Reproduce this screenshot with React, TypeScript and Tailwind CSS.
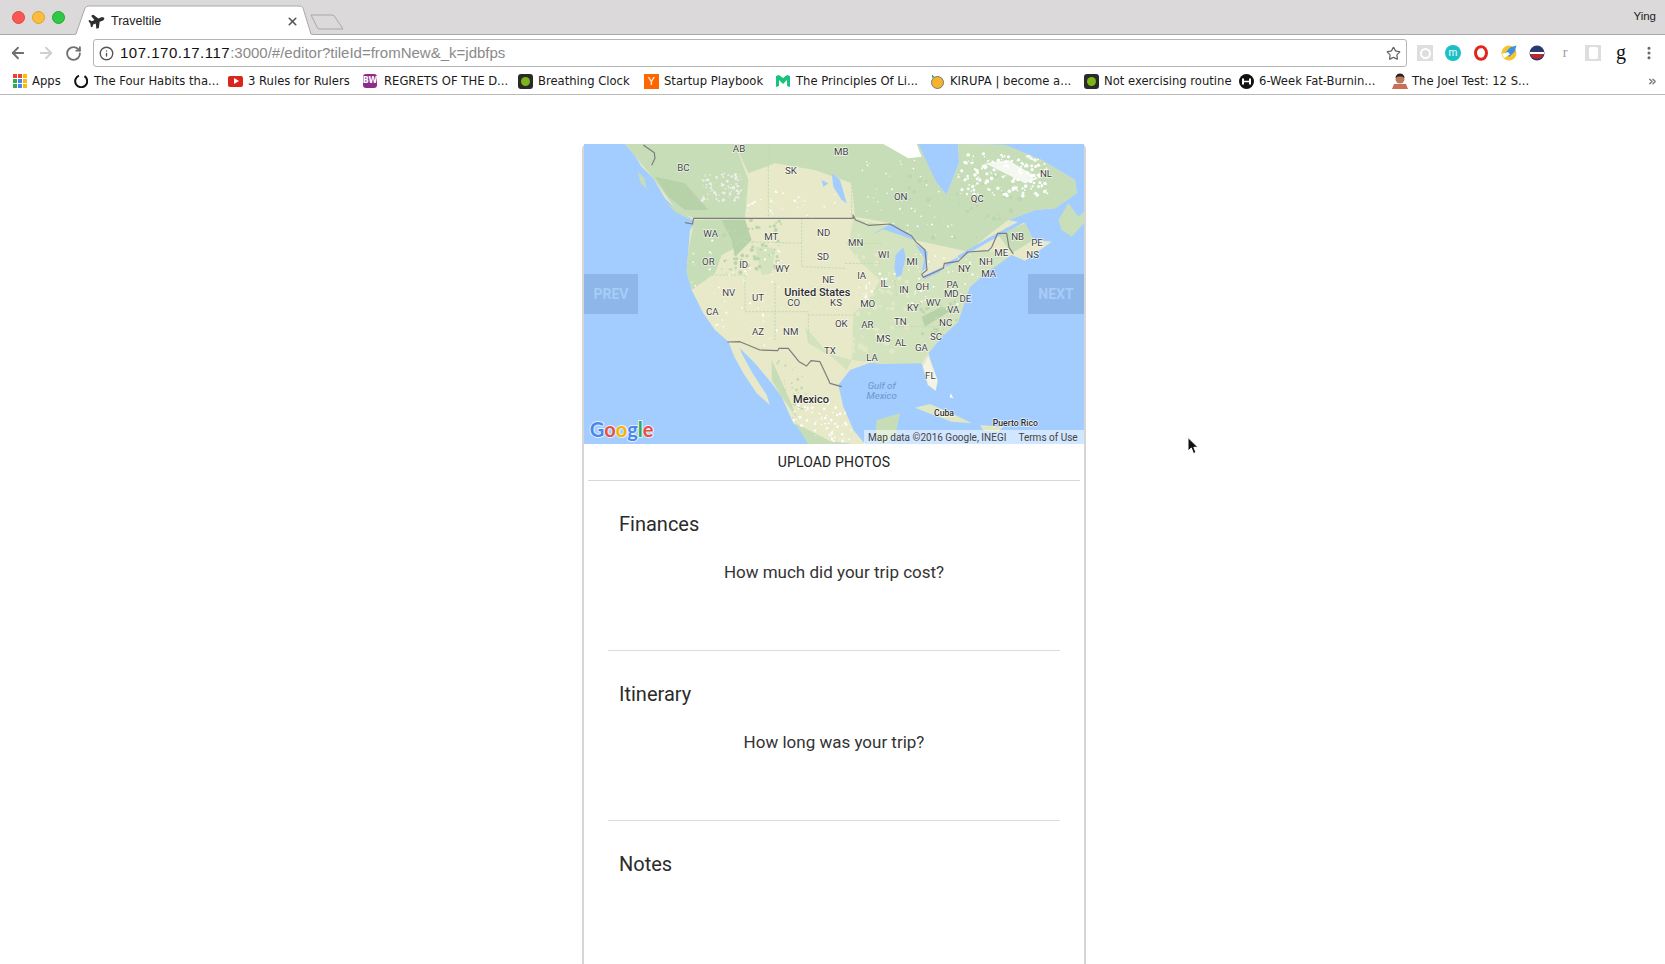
import { ArrowLeft, ArrowRight, ChevronsRight, Info, MoreVertical, RotateCw, Star, X } from "lucide-react";
import { FaPlane } from "react-icons/fa";
import type { ReactNode } from "react";

const stateLabels: [string, number, number][] = [
  ["AB", 492, 24], ["MB", 799, 33], ["BC", 325, 81], ["SK", 648, 90], ["ON", 977, 168], ["QC", 1207, 174],
  ["NL", 1413, 99], ["NB", 1328, 288], ["PE", 1386, 306], ["NS", 1373, 342], ["ME", 1279, 336], ["NH", 1233, 363],
  ["MA", 1241, 399], ["NY", 1168, 384], ["WA", 407, 279], ["MT", 589, 288], ["ND", 746, 276], ["MN", 842, 306],
  ["WI", 926, 342], ["MI", 1011, 363], ["OR", 400, 363], ["ID", 506, 372], ["WY", 622, 384], ["SD", 744, 348],
  ["NE", 760, 417], ["IA", 860, 405], ["IL", 928, 429], ["IN", 987, 447], ["OH", 1042, 438], ["PA", 1132, 432],
  ["MD", 1129, 459], ["DE", 1171, 474], ["NV", 461, 456], ["UT", 549, 471], ["CO", 656, 486], ["KS", 783, 486],
  ["MO", 878, 489], ["KY", 1014, 501], ["WV", 1075, 486], ["VA", 1135, 507], ["CA", 412, 513], ["OK", 799, 549],
  ["AR", 877, 552], ["TN", 976, 543], ["NC", 1112, 546], ["AZ", 549, 573], ["NM", 647, 573], ["TX", 765, 630],
  ["MS", 925, 594], ["AL", 977, 606], ["SC", 1083, 588], ["GA", 1039, 621], ["LA", 891, 651], ["FL", 1066, 705],
];

const landPath =
  "M150,12 L175,40 200,80 235,115 270,175 300,205 335,225 352,240 358,252 345,270 340,330 335,395 350,450 385,520 420,570 460,605 478,650 505,700 545,760 585,795 575,765 530,695 500,640 495,625 540,670 590,730 620,770 655,850 700,880 770,905 830,912 870,912 835,870 805,800 790,735 825,690 885,668 925,672 1000,665 1040,670 1058,735 1082,752 1088,720 1070,670 1060,640 1100,590 1150,545 1160,490 1185,440 1225,405 1260,375 1310,345 1350,362 1430,305 1375,300 1350,250 1300,240 1380,210 1440,205 1505,160 1500,120 1400,60 1290,15 1150,12 1152,70 1115,165 1085,130 1060,80 1030,12 Z";

// terrain texture: [x0, y0, x1, y1, count, colour, largest radius]
const textureAreas: [number, number, number, number, number, string, number][] = [
  [440, 240, 620, 400, 90, "#bad5ac", 5],
  [1030, 480, 1150, 590, 45, "#bcd6ae", 5],
  [590, 660, 700, 840, 50, "#c0d9b1", 4],
  [830, 330, 1000, 640, 70, "#e3e8c6", 8],
  [1000, 100, 1400, 300, 50, "#bcd6ae", 7],
  [380, 100, 500, 185, 90, "#efeeea", 3.5],
  [350, 300, 620, 620, 80, "#ffffff", 2.5],
  [1150, 40, 1420, 170, 190, "#ffffff", 4.5],
  [1000, 340, 1250, 520, 60, "#ffffff", 2.5],
  [650, 780, 830, 912, 90, "#ffffff", 3],
  [500, 150, 830, 235, 40, "#ffffff", 2.5],
  [850, 60, 1150, 300, 60, "#ffffff", 2],
  [840, 400, 960, 480, 25, "#ffffff", 3],
];

let seed = 7;
const next = () => {
  seed = (seed * 16807) % 2147483647;
  return seed / 2147483647;
};
const texture = textureAreas.flatMap(([x0, y0, x1, y1, count, fill, rMax]) =>
  Array.from({ length: count }, () => ({
    x: x0 + next() * (x1 - x0),
    y: y0 + next() * (y1 - y0),
    r: 1 + next() * rMax,
    fill,
  })),
);

function GoogleMap() {
  return (
    <svg viewBox="27 12 1500 900" width={500} height={300} className="block">
      <defs>
        <clipPath id="land-clip">
          <path d={landPath} />
        </clipPath>
        <filter id="soften" x="0" y="0" width="100%" height="100%">
          <feGaussianBlur stdDeviation="1.6" />
        </filter>
      </defs>
      <rect x="27" y="12" width="1500" height="900" fill="#a3ccff" />

      <g filter="url(#soften)">
        {/* land */}
        <path fill="#e8e9c9" d={landPath} />
        <path fill="#c8dfba" d="M1450,240 L1480,190 1510,230 1527,215 1527,250 1490,290 1460,270 Z" />

        {/* forest and low green cover */}
        <g fill="#c6ddb8">
          <path d="M150,12 L480,12 520,120 510,235 355,235 300,205 235,115 Z" />
          <path d="M480,12 L930,12 1030,12 1085,130 1115,165 1152,70 1150,12 1290,15 1400,60 1500,120 1505,160 1440,205 1380,210 1300,240 1240,285 1180,335 1020,300 950,250 840,230 830,130 720,90 600,70 520,100 Z" />
          <path d="M1270,285 L1350,250 1375,300 1310,340 Z" />
          <path d="M358,240 L510,238 525,300 440,345 420,400 350,450 335,395 340,330 Z" />
          <path d="M905,840 L975,820 960,890 930,912 900,900 Z" />
          <path d="M660,850 L770,905 830,912 700,912 Z" />
          <path d="M590,660 L640,770 670,840 620,770 590,720 Z" />
        </g>
        <g fill="#d3e3bd">
          <path d="M835,235 L945,260 1010,295 1050,335 1040,410 1105,385 1150,365 1180,338 1240,332 1310,345 1225,405 1185,440 1150,545 1100,590 1060,640 1040,670 925,672 830,660 835,520 880,480 915,420 860,370 820,320 Z" />
          <path d="M540,320 L600,325 590,400 560,405 Z" />
          <path d="M690,560 L760,640 830,660 815,690 770,650 700,610 Z" />
        </g>
        <g fill="#b7d2a9">
          <path d="M440,240 L510,240 530,300 480,350 470,300 Z" />
          <path d="M240,110 L330,130 400,210 330,210 280,170 Z" />
          <path d="M1040,530 L1100,500 1130,510 1050,560 Z" />
        </g>

        {/* snow and bare ground */}
        <g fill="#ffffff">
          <path d="M925,12 L1000,55 1040,50 1025,12 Z" />
          <path d="M1230,70 L1300,60 1390,115 1350,130 1290,100 Z" opacity={0.8} />
          <path d="M1060,650 L1075,690 1088,725 1082,752 1060,735 1045,680 Z" opacity={0.5} />
        </g>
        <g clipPath="url(#land-clip)">
          {texture.map((dot, i) => (
            <circle key={i} cx={dot.x} cy={dot.y} r={dot.r} fill={dot.fill} />
          ))}
        </g>

        {/* lakes */}
        <g fill="#a3ccff">
          <path d="M888,285 L950,250 1010,290 1015,300 975,285 925,268 Z" />
          <path d="M962,345 L985,322 992,350 980,405 965,412 958,385 Z" />
          <path d="M1020,312 L1058,335 1055,385 1040,395 1048,355 Z" />
          <path d="M1040,410 L1100,382 1112,378 1090,398 1050,416 Z" />
          <path d="M1108,372 L1148,352 1150,362 1115,380 Z" />
          <path d="M770,100 L795,120 815,190 800,180 775,140 Z" />
          <path d="M740,120 L760,130 745,140 Z" />
          <path d="M270,190 L300,205 340,240 355,252 338,250 305,225 Z" />
        </g>
        <path d="M1150,352 L1240,300 1310,262 1360,235" fill="none" stroke="#a3ccff" strokeWidth="10" />

        {/* islands */}
        <g fill="#c6ddb8">
          <path d="M188,95 L208,115 215,148 198,130 Z" />
          <path d="M275,190 L335,225 345,240 300,215 Z" />
          <path d="M1020,803 L1065,792 1130,820 1190,850 1130,845 1050,815 Z" fill="#dfe8c4" />
          <path d="M1215,855 L1285,860 1270,875 1225,872 Z" fill="#dfe8c4" />
          <path d="M1127,760 L1135,775 1124,772 Z" fill="#ffffff" />
        </g>

        {/* state lines */}
        <path
          d="M410,405 L510,405 510,515 700,515 700,600 M510,305 L680,310 680,380 815,385 M680,235 L680,310 M815,310 L920,310 M810,370 L915,370 M580,12 L580,235 M830,130 L830,235 M600,430 L600,600 M700,525 L840,525 M960,560 L1100,560 M960,420 L965,470"
          fill="none"
          stroke="#c2dab4"
          strokeWidth="3"
          strokeDasharray="7 4"
        />
      </g>

      {/* borders */}
      <g fill="none" stroke="#7c7c7c" strokeWidth="3.5" strokeLinejoin="round">
        <path d="M205,15 L238,38 240,55 230,76" />
        <path d="M330,248 L352,252 356,235 835,235 834,225 842,240 880,256 945,252 1010,288 1022,305 1050,330 1056,390 1040,403 1045,412 1105,385 1108,370 1150,364 1178,336 1240,332 1250,322 1268,280 1295,280 1302,322 1315,342" />
        <path d="M457,606 L495,605 555,630 608,632 612,625 640,625 672,665 695,678 708,662 735,665 765,730 800,740" />
      </g>

      {/* labels */}
      <g fontFamily="Roboto, sans-serif" textAnchor="middle" dominantBaseline="central" fill="#3f3f3f" stroke="#ffffff" strokeOpacity={0.75} strokeWidth="4" paintOrder="stroke">
        {stateLabels.map(([name, x, y]) => (
          <text key={name} x={x} y={y} fontSize="29">
            {name}
          </text>
        ))}
        <text x="727" y="456" fontSize="33" fontWeight="500" fill="#2e2e2e">United States</text>
        <text x="708" y="777" fontSize="33" fontWeight="500" fill="#2e2e2e">Mexico</text>
        <text x="1107" y="819" fontSize="26" fontWeight="500" fill="#2e2e2e">Cuba</text>
        <text x="1321" y="849" fontSize="26" fontWeight="500" fill="#2e2e2e">Puerto Rico</text>
        <g fill="#6a97cf" stroke="none" fontStyle="italic" fontSize="29">
          <text x="920" y="735">Gulf of</text>
          <text x="920" y="765">Mexico</text>
        </g>
      </g>

      {/* logo */}
      <text
        x="44"
        y="892"
        fontFamily="Lato, sans-serif"
        fontSize="60"
        fontWeight="700"
        stroke="#ffffff"
        strokeOpacity={0.7}
        strokeWidth="6"
        paintOrder="stroke"
      >
        <tspan fill="#4a86f0">G</tspan>
        <tspan fill="#e8503f">o</tspan>
        <tspan fill="#f4b400">o</tspan>
        <tspan fill="#4a86f0">g</tspan>
        <tspan fill="#35a853">l</tspan>
        <tspan fill="#e8503f">e</tspan>
      </text>
    </svg>
  );
}

function Bookmark({ icon, label, className }: { icon: ReactNode; label: string; className: string }) {
  return (
    <div className={`flex shrink-0 items-center whitespace-nowrap ${className}`}>
      {icon}
      <span className="ml-px">{label}</span>
    </div>
  );
}

function Section({ title, question }: { title: string; question?: string }) {
  return (
    <section className="mx-6 h-[170px] border-b border-[#dcdcdc] pt-[29px] last:border-b-0">
      <h2 className="pl-[11px] text-[20px] leading-7 text-[#2b2b2b]">{title}</h2>
      {question && <p className="mt-[22px] text-center text-[17px] leading-6 text-[#333333]">{question}</p>}
    </section>
  );
}

function GreenDot() {
  return (
    <span className="mr-1 flex h-[15px] w-[15px] items-center justify-center rounded-[3px] bg-[#2a2a2a]">
      <span className="h-[9px] w-[9px] rounded-full bg-[#7cb518]" />
    </span>
  );
}

const appColors = [
  "bg-[#ea4335]", "bg-[#ea4335]", "bg-[#fbbc05]",
  "bg-[#34a853]", "bg-[#4285f4]", "bg-[#fbbc05]",
  "bg-[#34a853]", "bg-[#4285f4]", "bg-[#fbbc05]",
];

export default function App() {
  return (
    <div className="h-screen overflow-hidden bg-white font-['Roboto',sans-serif]">
      {/* Tab strip */}
      <div className="flex h-[35px] items-end border-b border-[#a9a9a9] bg-[#dbd9da] pl-3">
        <div className="mb-[10px] flex gap-[7px]">
          <span className="h-[13px] w-[13px] rounded-full border border-[#e0443e] bg-[#fc5753]" />
          <span className="h-[13px] w-[13px] rounded-full border border-[#dea123] bg-[#fdbc40]" />
          <span className="h-[13px] w-[13px] rounded-full border border-[#1aab29] bg-[#33c748]" />
        </div>

        <div className="relative -mb-px ml-[7px] flex h-[30px] w-[243px] items-center pl-[17px] pr-4 pt-[2px] font-['Liberation_Sans',sans-serif] text-[12.5px] text-[#222222]">
          <svg viewBox="0 0 243 30" className="absolute inset-0 h-full w-full">
            <path d="M0,30 L4,29 L13,3 Q14,1 17,1 L227,1 Q230,1 231,3 L239,29 L243,30 Z" fill="#ffffff" />
            <path d="M0,30 L4,29 L13,3 Q14,1 17,1 L227,1 Q230,1 231,3 L239,29 L243,29.5" fill="none" stroke="#a9a9a9" />
          </svg>
          <FaPlane className="relative h-4 w-4 -rotate-[22deg] text-[#2e2e2e]" />
          <span className="relative ml-[6px]">Traveltile</span>
          <X className="relative ml-auto h-[13px] w-[13px] text-[#555555]" strokeWidth={3} />
        </div>

        <svg viewBox="0 0 34 16" className="mb-[4px] -ml-[5px] h-4 w-[34px]">
          <path d="M1,1 L22,1 Q24,1 25,3 L33,15 L9,15 Q8,15 7,13 Z" fill="none" stroke="#a9a9a9" />
        </svg>

        <span className="mb-[9px] ml-auto pr-[9px] font-['Liberation_Sans',sans-serif] text-[11.5px] text-[#222222]">Ying</span>
      </div>

      {/* Address bar */}
      <div className="flex h-[32px] items-center pl-[9px] pt-1">
        <ArrowLeft className="h-[18px] w-[18px] text-[#6f6f6f]" strokeWidth={2.4} />
        <ArrowRight className="ml-[10px] h-[18px] w-[18px] text-[#cfcfcf]" strokeWidth={2.4} />
        <RotateCw className="ml-[10px] h-[17px] w-[17px] text-[#6f6f6f]" strokeWidth={2.6} />
        <div className="ml-[11px] flex h-[28px] w-[1314px] items-center rounded-[3px] border border-[#b5b5b5] pl-[5px] pr-[5px] font-['Liberation_Sans',sans-serif] text-[15px]">
          <Info className="h-[15px] w-[15px] text-[#555555]" strokeWidth={2.2} />
          <span className="ml-[6px] tracking-[0.5px] text-[#111111]">107.170.17.117</span>
          <span className="text-[#8a8a8a]">:3000/#/editor?tileId=fromNew&amp;_k=jdbfps</span>
          <Star className="ml-auto h-[15px] w-[15px] text-[#666666]" strokeWidth={2} />
        </div>

        {/* Extensions */}
        <div className="ml-[10px] flex items-center gap-3">
          <span className="flex h-4 w-4 items-center justify-center bg-[#dedede]">
            <span className="h-[11px] w-[11px] rounded-full border-2 border-white" />
          </span>
          <span className="flex h-4 w-4 items-center justify-center rounded-full bg-[#1cbfc6] text-[10px] leading-none text-white">m</span>
          <svg viewBox="0 0 16 16" className="h-4 w-4">
            <ellipse cx="8" cy="8" rx="5.5" ry="6.2" fill="#ffffff" stroke="#e0261f" strokeWidth="3" />
            <path d="M5,5 L8,4 9.5,3 10,8 8,11 5.5,11 Z" fill="#ffffff" />
          </svg>
          <svg viewBox="0 0 16 16" className="h-4 w-4">
            <circle cx="8" cy="8" r="7.5" fill="#f7c52b" />
            <path d="M15.5,0.5 L9,2.5 4,8 8,12 13.5,7 Z" fill="#3d8fe6" />
            <path d="M1,9 L7,7 9,9.5 3,13 Z" fill="#ffffff" />
          </svg>
          <svg viewBox="0 0 16 16" className="h-4 w-4">
            <circle cx="8" cy="8" r="7.5" fill="#2b3a6e" />
            <path d="M1,9 L15,9 A7.5,7.5 0 0 1 1,9 Z" fill="#c0272d" />
            <rect x="1" y="7" width="14" height="2" fill="#ffffff" />
          </svg>
          <span className="flex h-4 w-4 items-center justify-center font-['Liberation_Serif',serif] text-[14px] leading-none text-[#9a9a9a]">r</span>
          <span className="flex h-4 w-4 items-center justify-center bg-[#dedede]">
            <span className="h-3 w-[9px] rounded-[2px] bg-white" />
          </span>
          <span className="flex h-4 w-4 items-center justify-center pb-[3px] font-['Liberation_Serif',serif] text-[20px] leading-none text-[#111111]">g</span>
          <MoreVertical className="h-4 w-4 text-[#666666]" strokeWidth={2.6} />
        </div>
      </div>

      {/* Bookmarks bar */}
      <div className="flex h-[28px] items-center border-b border-[#b9b9b9] pl-[13px] pt-[2px] font-['DejaVu_Sans',sans-serif] text-[11.6px] text-[#1a1a1a]">
        <Bookmark
          className="w-[61px]"
          label="Apps"
          icon={
            <span className="mr-[4px] grid h-[14px] w-[14px] grid-cols-3 gap-px">
              {appColors.map((color, i) => (
                <span key={i} className={color} />
              ))}
            </span>
          }
        />
        <Bookmark
          className="w-[154px]"
          label="The Four Habits tha..."
          icon={
            <svg viewBox="0 0 14 14" className="mr-[5px] h-[14px] w-[14px]">
              <path d="M5,1.6 A6,6 0 1 0 10.5,2.2" fill="none" stroke="#111111" strokeWidth="2" />
            </svg>
          }
        />
        <Bookmark
          className="w-[135px]"
          label="3 Rules for Rulers"
          icon={
            <span className="mr-1 flex h-[11px] w-[15px] items-center justify-center rounded-[2px] bg-[#d9251c]">
              <span className="ml-px h-0 w-0 border-y-[3px] border-l-[5px] border-y-transparent border-l-white" />
            </span>
          }
        />
        <Bookmark
          className="w-[155px]"
          label="REGRETS OF THE D..."
          icon={
            <span className="mr-[6px] flex h-[14px] w-[14px] items-center justify-center rounded-[3px] bg-[#8f2a8a] text-[8px] font-bold leading-none text-white">
              BW
            </span>
          }
        />
        <Bookmark className="w-[126px]" label="Breathing Clock" icon={<GreenDot />} />
        <Bookmark
          className="w-[132px]"
          label="Startup Playbook"
          icon={
            <span className="mr-1 flex h-[15px] w-[15px] items-center justify-center bg-[#ff6600] font-['Liberation_Sans',sans-serif] text-[11px] leading-none text-white">
              Y
            </span>
          }
        />
        <Bookmark
          className="w-[154px]"
          label="The Principles Of Li..."
          icon={
            <svg viewBox="0 0 14 12" className="mr-[5px] h-3 w-[14px]">
              <path d="M0,1 L3,0 L3,11 L0,12 Z M3,0 L7,3 L11,0 L14,1 L14,12 L11,11 L11,5 L7,9 L3,5 Z" fill="#19c37d" />
            </svg>
          }
        />
        <Bookmark
          className="w-[154px]"
          label="KIRUPA | become a..."
          icon={
            <svg viewBox="0 0 15 15" className="mr-1 h-[15px] w-[15px]">
              <circle cx="7.5" cy="8.5" r="6" fill="#f7b32b" stroke="#777777" />
              <path d="M2,0.5 L5,3.5 L2,3.5 Z" fill="#3f9b2f" />
            </svg>
          }
        />
        <Bookmark className="w-[155px]" label="Not exercising routine" icon={<GreenDot />} />
        <Bookmark
          className="w-[153px]"
          label="6-Week Fat-Burnin..."
          icon={
            <svg viewBox="0 0 15 15" className="mr-1 h-[15px] w-[15px]">
              <circle cx="7.5" cy="7.5" r="7.5" fill="#111111" />
              <path d="M3,4.5 L5,4.5 L5,6.8 L10,6.8 L10,4.5 L12,4.5 L12,10.5 L10,10.5 L10,8.2 L5,8.2 L5,10.5 L3,10.5 Z" fill="#ffffff" />
            </svg>
          }
        />
        <Bookmark
          className="w-[200px]"
          label="The Joel Test: 12 S..."
          icon={
            <svg viewBox="0 0 16 16" className="mr-[3px] h-4 w-4">
              <path d="M0,16 L2,11 L14,11 L16,16 Z" fill="#c9705a" />
              <circle cx="8" cy="6" r="4.5" fill="#b77c5e" />
              <path d="M3.5,5 Q4,0.5 8,0.5 Q12,0.5 12.5,5 L10,3.5 L6,3.5 Z" fill="#2d2018" />
            </svg>
          }
        />
        <ChevronsRight className="ml-auto mr-[7px] h-[11px] w-[11px] text-[#777777]" strokeWidth={3} />
      </div>

      {/* Page */}
      <div className="pl-[582px] pt-[49px]">
        <div className="w-[504px] rounded-t-[5px] border-x-2 border-[#d6d6d6] bg-white">
          <div className="relative h-[300px]">
            <GoogleMap />
            <button className="absolute left-0 top-[130px] h-10 w-[54px] bg-[#8fb6e8] text-[14px] font-bold text-[#a7ccfa]">PREV</button>
            <button className="absolute right-0 top-[130px] h-10 w-[56px] bg-[#8fb6e8] text-[14px] font-bold text-[#a7ccfa]">NEXT</button>
            <div className="absolute bottom-0 right-0 flex h-[14px] w-[220px] items-center bg-white/50 pl-1 pt-px text-[10px] leading-none text-[#444444]">
              <span>Map data ©2016 Google, INEGI</span>
              <span className="ml-3">Terms of Use</span>
            </div>
          </div>

          <div className="mx-1 flex h-[37px] items-center justify-center border-b border-[#d8d8d8] text-[14px] tracking-[0.15px] text-[#222222]">
            UPLOAD PHOTOS
          </div>

          <Section title="Finances" question="How much did your trip cost?" />
          <Section title="Itinerary" question="How long was your trip?" />
          <Section title="Notes" />
        </div>
      </div>

      {/* Mouse cursor */}
      <svg viewBox="0 0 12 18" className="absolute left-[1187px] top-[437px] h-[18px] w-3">
        <path d="M1,0.5 L1,14 L4.3,11 L6.5,16.5 L9,15.5 L6.8,10.3 L11,10.3 Z" fill="#111111" stroke="#ffffff" />
      </svg>
    </div>
  );
}
